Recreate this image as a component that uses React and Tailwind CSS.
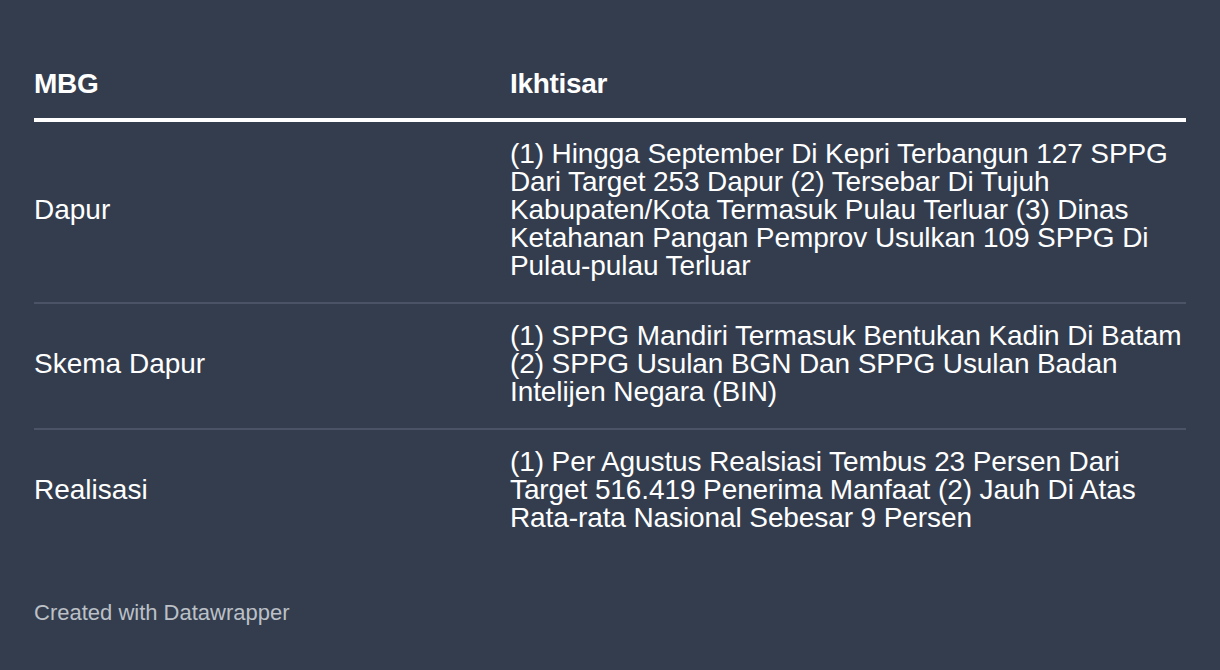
const rows = [
  {
    label: "Dapur",
    text: "(1) Hingga September Di Kepri Terbangun 127 SPPG Dari Target 253 Dapur (2) Tersebar Di Tujuh Kabupaten/Kota Termasuk Pulau Terluar (3) Dinas Ketahanan Pangan Pemprov Usulkan 109 SPPG Di Pulau-pulau Terluar",
  },
  {
    label: "Skema Dapur",
    text: "(1) SPPG Mandiri Termasuk Bentukan Kadin Di Batam (2) SPPG Usulan BGN Dan SPPG Usulan Badan Intelijen Negara (BIN)",
  },
  {
    label: "Realisasi",
    text: "(1) Per Agustus Realsiasi Tembus 23 Persen Dari Target 516.419 Penerima Manfaat (2) Jauh Di Atas Rata-rata Nasional Sebesar 9 Persen",
  },
];

export default function App() {
  return (
    <div className="h-[670px] w-full bg-[#333d4e] px-[34px] pt-[70px] font-['Liberation_Sans',Arial,sans-serif] text-white">
      <div className="grid grid-cols-[476px_1fr] border-b-4 border-white pb-[20px] text-[28px] leading-[28px] font-bold tracking-[-0.3px]">
        <div>MBG</div>
        <div>Ikhtisar</div>
      </div>

      {rows.map((row, i) => (
        <div
          key={row.label}
          className={`grid grid-cols-[476px_1fr] items-center pt-[18px] pb-[22px] text-[28px] leading-[28px] ${
            i < rows.length - 1 ? "border-b-2 border-[#4a5466]" : ""
          }`}
        >
          <div>{row.label}</div>
          <div className="mr-[-4px] tracking-[-0.1px]">{row.text}</div>
        </div>
      ))}

      <div className="mt-[48px] text-[22px] leading-[22px] text-[#bcc0c7]">Created with Datawrapper</div>
    </div>
  );
}
